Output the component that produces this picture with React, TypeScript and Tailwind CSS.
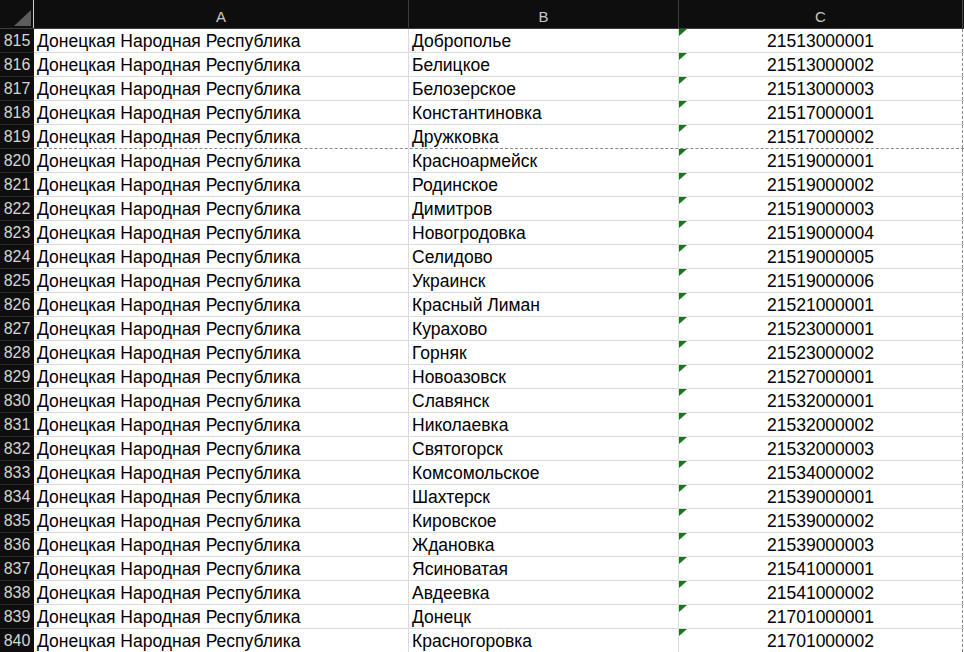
const rows: [number, string, string][] = [
  [815, 'Доброполье', '21513000001'],
  [816, 'Белицкое', '21513000002'],
  [817, 'Белозерское', '21513000003'],
  [818, 'Константиновка', '21517000001'],
  [819, 'Дружковка', '21517000002'],
  [820, 'Красноармейск', '21519000001'],
  [821, 'Родинское', '21519000002'],
  [822, 'Димитров', '21519000003'],
  [823, 'Новогродовка', '21519000004'],
  [824, 'Селидово', '21519000005'],
  [825, 'Украинск', '21519000006'],
  [826, 'Красный Лиман', '21521000001'],
  [827, 'Курахово', '21523000001'],
  [828, 'Горняк', '21523000002'],
  [829, 'Новоазовск', '21527000001'],
  [830, 'Славянск', '21532000001'],
  [831, 'Николаевка', '21532000002'],
  [832, 'Святогорск', '21532000003'],
  [833, 'Комсомольское', '21534000002'],
  [834, 'Шахтерск', '21539000001'],
  [835, 'Кировское', '21539000002'],
  [836, 'Ждановка', '21539000003'],
  [837, 'Ясиноватая', '21541000001'],
  [838, 'Авдеевка', '21541000002'],
  [839, 'Донецк', '21701000001'],
  [840, 'Красногоровка', '21701000002'],
];

function HeaderRow() {
  return (
    <div className="flex h-[29px] bg-[#0e0e0e] border-b border-[#3c3c3c] text-[15px] leading-none text-[#c9c9c9]">
      <div className="relative w-[34px] shrink-0 border-r border-[#d0d0d0]">
        {/* select-all corner */}
        <svg className="absolute right-[2px] bottom-[2px]" width="17" height="16" viewBox="0 0 17 16">
          <polygon points="17,0 17,16 0,16" fill="#5c5c5c" />
        </svg>
      </div>
      <div className="w-[375px] shrink-0 border-r border-[#3c3c3c] flex items-end justify-center pb-[4px]">A</div>
      <div className="w-[270px] shrink-0 border-r border-[#3c3c3c] flex items-end justify-center pb-[4px]">B</div>
      <div className="w-[284px] shrink-0 border-r border-[#4a4a4a] flex items-end justify-center pb-[4px]">C</div>
      <div className="flex-1" />
    </div>
  );
}

export default function App() {
  return (
    <div className="w-[964px] h-[652px] overflow-hidden bg-white font-['Liberation_Sans',Arial,sans-serif]">
      <HeaderRow />
      {rows.map(([n, city, code]) => {
        const pageBreak = n === 819;
        return (
          <div key={n} className="flex h-6">
            <div className="w-[34px] shrink-0 bg-[#0e0e0e] text-[#d4d4d4] text-[16px] leading-none flex items-end justify-center pb-[3px] border-b border-[#2a2a2a]">
              {n}
            </div>
            <div
              className={`flex flex-1 text-[17.5px] text-black leading-none ${
                pageBreak ? 'border-b border-dashed border-[#8a8a8a]' : 'border-b border-[#dcdcdc]'
              }`}
            >
              <div className="w-[375px] shrink-0 border-r border-[#dcdcdc] flex items-end pl-[3px] pb-[2px]">
                Донецкая Народная Республика
              </div>
              <div className="w-[270px] shrink-0 border-r border-[#dcdcdc] flex items-end pl-[3px] pb-[2px]">
                {city}
              </div>
              <div className="relative w-[284px] shrink-0 border-r border-dashed border-[#8a8a8a] flex items-end justify-center pb-[2px]">
                <svg className="absolute left-0 top-0" width="8" height="7" viewBox="0 0 8 7">
                  <polygon points="0,0 8,0 0,7" fill="#17761a" />
                </svg>
                {code}
              </div>
              <div className="flex-1" />
            </div>
          </div>
        );
      })}
    </div>
  );
}
